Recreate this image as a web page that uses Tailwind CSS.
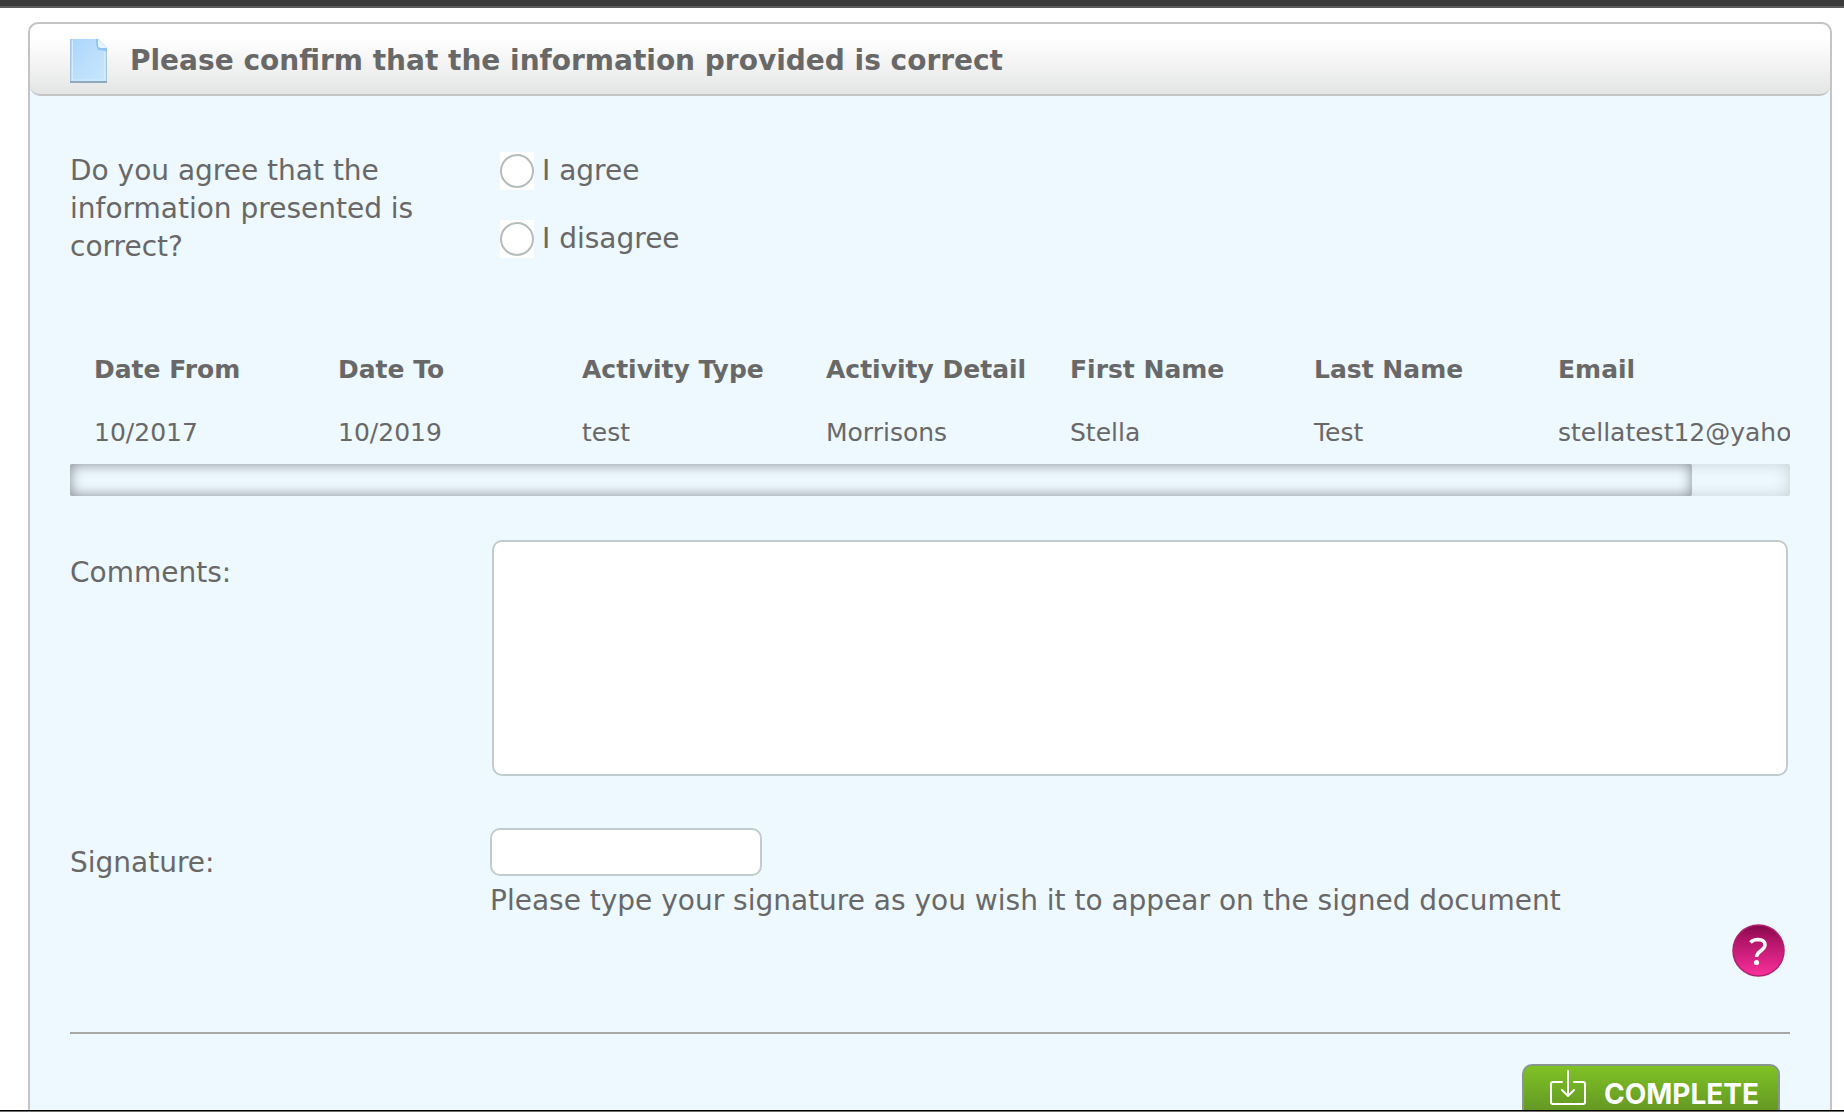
<!DOCTYPE html>
<html lang="en">
<head>
  <meta charset="UTF-8" />
  <meta name="viewport" content="width=device-width, initial-scale=1.0" />
  <title>Confirm Information</title>
  <script src="https://cdn.jsdelivr.net/npm/@tailwindcss/browser@4"></script>
</head>
<body class="h-screen overflow-hidden flex flex-col bg-white text-[#686868] font-['Verdana','DejaVu_Sans',sans-serif] text-[28px] leading-[38px]">
  <!-- Top bar -->
  <div class="h-2 shrink-0 bg-[#3b3b3b] border-b-2 border-[#5c5c5c]"></div>

  <main class="flex-1 min-h-0 overflow-hidden pt-[14px] pl-7 pr-3">
    <form class="border-2 border-[#c4c4c4] rounded-[10px] bg-[#edf8ff]" onsubmit="return false">
      <header class="flex items-center gap-[22px] h-[72px] px-10 pt-[3px] rounded-[10px] border-b-2 border-[#c4c4c4] bg-linear-to-b from-white from-20% to-[#e4e6e5]">
        <svg class="w-[38px] h-11 shrink-0" viewBox="0 0 38 44" aria-hidden="true">
          <defs>
            <linearGradient id="page" x1="0" y1="0" x2="1" y2="1">
              <stop offset="0" stop-color="#a9d5fb" />
              <stop offset="0.5" stop-color="#bcdffc" />
              <stop offset="1" stop-color="#c8e7fe" />
            </linearGradient>
          </defs>
          <path d="M0 0h28l9 9v35H0z" fill="url(#page)" />
          <path d="M2.500 1.500v39.500h32V11" fill="none" stroke="#d3ebfd" />
          <path d="M0.500 0v43M36.500 9v34" fill="none" stroke="#a6c6e2" />
          <path d="M0 43h37" stroke="#8fa9bf" stroke-width="2" />
          <path d="M26 0h2l9 9v4q-3-2-9-2-2-4-2-11z" fill="#8fc4f2" />
          <path d="M28 0l9 9h-6q-3 0-3-3z" fill="#e6f4ff" />
        </svg>
        <h1 class="font-bold whitespace-nowrap">Please confirm that the information provided is correct</h1>
      </header>

      <div class="px-10 pt-14">
        <!-- Agreement -->
        <fieldset class="flex" aria-labelledby="agreeText">
          <div id="agreeText" class="w-[420px] pr-[60px] shrink-0">Do you agree that the information presented is correct?</div>
          <div class="flex flex-col gap-[30px] pl-[10px]">
            <label class="flex items-center gap-2">
              <span class="flex items-center w-[34px] h-[38px] bg-white">
                <input type="radio" name="agree" value="yes" class="appearance-none size-[34px] rounded-full border-2 border-[#b3bdbc] bg-white checked:bg-[#7fc225]" />
              </span>
              I agree
            </label>
            <label class="flex items-center gap-2">
              <span class="flex items-center w-[34px] h-[38px] bg-white">
                <input type="radio" name="agree" value="no" class="appearance-none size-[34px] rounded-full border-2 border-[#b3bdbc] bg-white checked:bg-[#7fc225]" />
              </span>
              I disagree
            </label>
          </div>
        </fieldset>

        <!-- Activity table -->
        <div class="mt-[72px] overflow-hidden">
          <table class="table-fixed w-[1830px] text-[25px] text-left whitespace-nowrap">
            <thead>
              <tr class="h-[63px]">
                <th class="pl-6">Date From</th>
                <th class="pl-6">Date To</th>
                <th class="pl-6">Activity Type</th>
                <th class="pl-6">Activity Detail</th>
                <th class="pl-6">First Name</th>
                <th class="pl-6">Last Name</th>
                <th class="pl-6 w-[366px]">Email</th>
              </tr>
            </thead>
            <tbody>
              <tr class="h-[63px]">
                <td class="pl-6">10/2017</td>
                <td class="pl-6">10/2019</td>
                <td class="pl-6">test</td>
                <td class="pl-6">Morrisons</td>
                <td class="pl-6">Stella</td>
                <td class="pl-6">Test</td>
                <td class="pl-6">stellatest12@yaho</td>
              </tr>
            </tbody>
          </table>
          <div class="h-8 rounded-xs shadow-[inset_0_0_16px_rgba(0,0,0,0.16)]">
            <div class="h-full w-[94.300%] rounded-xs bg-[#edf8ff] shadow-[inset_0_0_14px_rgba(0,0,0,0.45)]"></div>
          </div>
        </div>

        <div class="flex mt-11">
          <label for="comments" class="w-[422px] shrink-0 pt-[14px]">Comments:</label>
          <textarea id="comments" class="flex-1 h-[236px] mr-[2px] p-2 resize-none rounded-[10px] border-2 border-[#c0cccd] bg-white"></textarea>
        </div>

        <div class="flex mt-[52px]">
          <label for="signature" class="w-[420px] shrink-0 pt-4">Signature:</label>
          <div class="flex-1">
            <input id="signature" type="text" aria-describedby="signatureHint" class="block w-[272px] h-12 px-2 rounded-[10px] border-2 border-[#c0cccd] bg-white" />
            <p id="signatureHint" class="mt-[6px]">Please type your signature as you wish it to appear on the signed document</p>
          </div>
        </div>

        <div class="flex justify-end mt-1 pr-[5px]">
          <button type="button" aria-label="Help" class="size-[53px]">
            <svg viewBox="0 0 53 53" class="size-full">
              <defs>
                <linearGradient id="help" x1="0" y1="0" x2="0" y2="1">
                  <stop offset="0" stop-color="#83094b" />
                  <stop offset="0.25" stop-color="#ac1263" />
                  <stop offset="1" stop-color="#fb309c" />
                </linearGradient>
              </defs>
              <circle cx="26.500" cy="26.500" r="25.500" fill="url(#help)" stroke="#b02270" stroke-width="1.500" />
              <path d="M18.500 18.500Q21 15.600 26 15.600Q33 15.800 33 21C33 26.500 24.800 27 24.500 33" fill="none" stroke="#fff" stroke-width="3.500" />
              <circle cx="24.500" cy="38.500" r="2.600" fill="#fff" />
            </svg>
          </button>
        </div>

        <hr class="mt-[55px] border-t-2 border-[#a8a8a8]" />

        <div class="flex justify-end mt-[30px] pr-[10px] pb-10">
          <button type="submit" class="flex items-center gap-[18px] w-[258px] h-[60px] pl-[26px] rounded-[10px] border-2 border-[#88968f] bg-linear-to-b from-[#7fc225] to-[#5d8e23] font-['Inter',sans-serif] font-bold text-white whitespace-nowrap">
            <svg class="w-9 h-9 mb-3 shrink-0" viewBox="0 0 36 36" fill="none" stroke="#fff" stroke-width="2" stroke-linecap="round" stroke-linejoin="round" aria-hidden="true">
              <path d="M12 12H3q-2 0-2 2v18q0 2 2 2h30q2 0 2-2V14q0-2-2-2h-9" />
              <path d="M18 1v25M12 20l6 6 6-6" />
            </svg>
            COMPLETE
          </button>
        </div>
      </div>
    </form>
  </main>

  <!-- Bottom edge -->
  <div class="shrink-0 h-[2px] bg-[#6b6f6b] border-t border-black"></div>
</body>
</html>
